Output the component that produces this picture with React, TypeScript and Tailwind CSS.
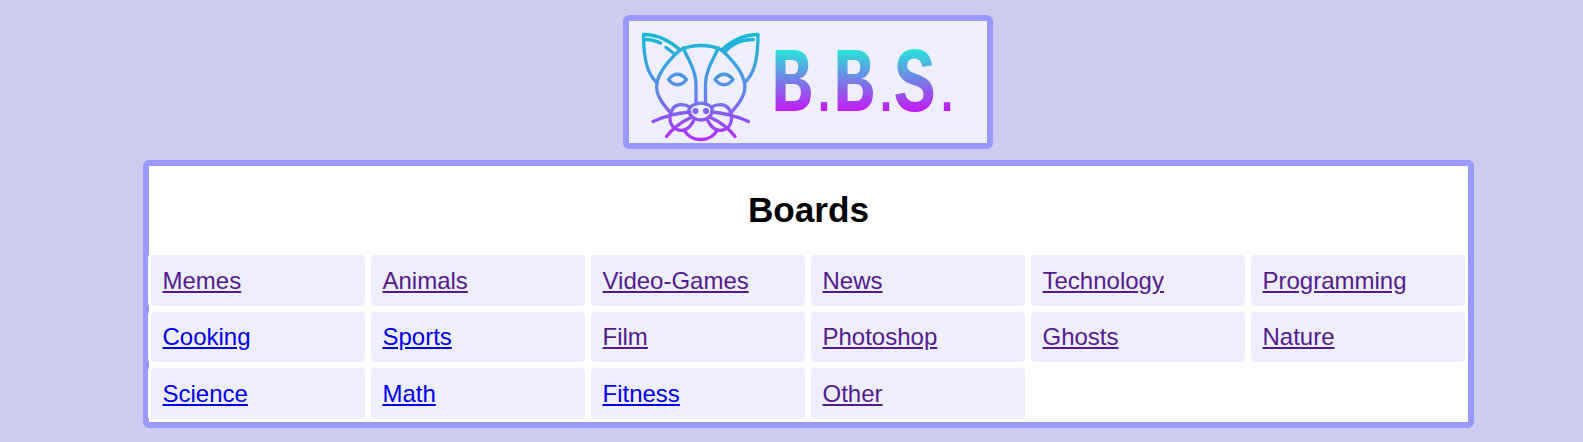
const purple = "text-[#551a8b]";
const blue = "text-[#0000ee]";

const boards: [string, string][] = [
  ["Memes", purple],
  ["Animals", purple],
  ["Video-Games", purple],
  ["News", purple],
  ["Technology", purple],
  ["Programming", purple],
  ["Cooking", blue],
  ["Sports", blue],
  ["Film", purple],
  ["Photoshop", purple],
  ["Ghosts", purple],
  ["Nature", purple],
  ["Science", blue],
  ["Math", blue],
  ["Fitness", blue],
  ["Other", purple],
];

function Half({ mirror }: { mirror?: boolean }) {
  return (
    <g transform={mirror ? "translate(1401.5,0) scale(-1,1)" : undefined}>
      {/* ear */}
      <path d="M680 50C670 41 658 34.5 643.5 34.5C643.5 46 644 56 647 66C649 73 653 79 657 83" />
      {mirror ? (
        <path d="M648 39.5C660 39.5 670 44 676.5 52" />
      ) : (
        <>
          <path d="M646 39.5C651 39.5 656 41 660.5 43" />
          <path d="M666 47.5L674 53.5" />
        </>
      )}
      {/* cheek */}
      <path d="M680 50C669 60 659 71 657 83C655 92 660 102 672 114" />
      {/* forehead */}
      <path d="M683 48C690 62 696 72 696 84L696 104" />
      {/* eye */}
      <path d="M668.5 79.5C674 72.5 681 72.5 686.5 79.5C681 86.5 674 86.5 668.5 79.5Z" />
      {/* muzzle */}
      <path d="M690 107C683 103 675 104 672 110C668 117 670 126 676 129C684 133 690 128 694 120" />
      <path d="M684 130C688 137 694 139.5 700.75 139.5" />
      {/* whiskers */}
      <path d="M653 121.5C665 116 677 113 690 112" />
      <path d="M666.5 136.5C673 128 681 122 691 117.5" />
      <circle cx="695.5" cy="111" r="1.4" />
    </g>
  );
}

function Logo() {
  return (
    <svg
      viewBox="629 21 358 122"
      className="block w-[358px] h-[122px]"
      role="img"
      aria-label="B.B.S."
    >
      <defs>
        <linearGradient id="catGrad" gradientUnits="userSpaceOnUse" x1="0" y1="34" x2="0" y2="140">
          <stop offset="0" stopColor="#12bcd4" />
          <stop offset="0.55" stopColor="#5f88ea" />
          <stop offset="1" stopColor="#b52aff" />
        </linearGradient>
        <linearGradient id="textGrad" gradientUnits="userSpaceOnUse" x1="0" y1="-62" x2="0" y2="0">
          <stop offset="0" stopColor="#26e6d8" />
          <stop offset="0.45" stopColor="#6c8ae6" />
          <stop offset="1" stopColor="#c31af5" />
        </linearGradient>
      </defs>
      <g fill="none" stroke="url(#catGrad)" strokeWidth="3.3" strokeLinecap="round" strokeLinejoin="round">
        <Half />
        <Half mirror />
        <path d="M680 50C693 44 709 44 722 50" />
        <path d="M696 104C699 103 703 103 706 104C710 105 713 108 712 112C711 117 706 120 701 120C696 120 690 117 689 112C688 108 692 105 696 104Z" />
      </g>
      <text
        transform="translate(0,111) scale(0.75,1)"
        fontFamily="'Liberation Mono', monospace"
        fontWeight="700"
        fontSize="92"
        fill="url(#textGrad)"
      >
        <tspan x="1028">B</tspan>
        <tspan x="1080.7" fontSize="60">.</tspan>
        <tspan x="1110.7">B</tspan>
        <tspan x="1163.3" fontSize="60">.</tspan>
        <tspan x="1192">S</tspan>
        <tspan x="1244.7" fontSize="60">.</tspan>
      </text>
    </svg>
  );
}

export default function App() {
  return (
    <div className="min-h-screen bg-[#ccccee] pt-[15px] pl-[143px] font-['Liberation_Sans',Arial,sans-serif]">
      <div className="w-[370px] ml-[480px] border-[6px] border-[#9999ff] rounded-md bg-[#eeeeff]">
        <Logo />
      </div>
      <div className="w-[1331px] h-[268px] mt-[11px] border-[6px] border-[#9999ff] rounded-md bg-white">
        <h1 className="h-[86px] pt-[23px] text-center text-[35.2px] leading-[41px] font-bold text-black">
          Boards
        </h1>
        <div className="grid grid-cols-[repeat(6,220px)] grid-rows-[56.8px_56.7px_56.5px] -ml-px">
          {boards.map(([name, color]) => (
            <div
              key={name}
              className="border-[3px] border-white rounded-md bg-[#eeeeff] pl-[11.5px] pt-[11.6px] bg-clip-padding"
            >
              <a href="#" className={`text-[24px] leading-[27px] underline ${color}`}>
                {name}
              </a>
            </div>
          ))}
        </div>
      </div>
    </div>
  );
}
